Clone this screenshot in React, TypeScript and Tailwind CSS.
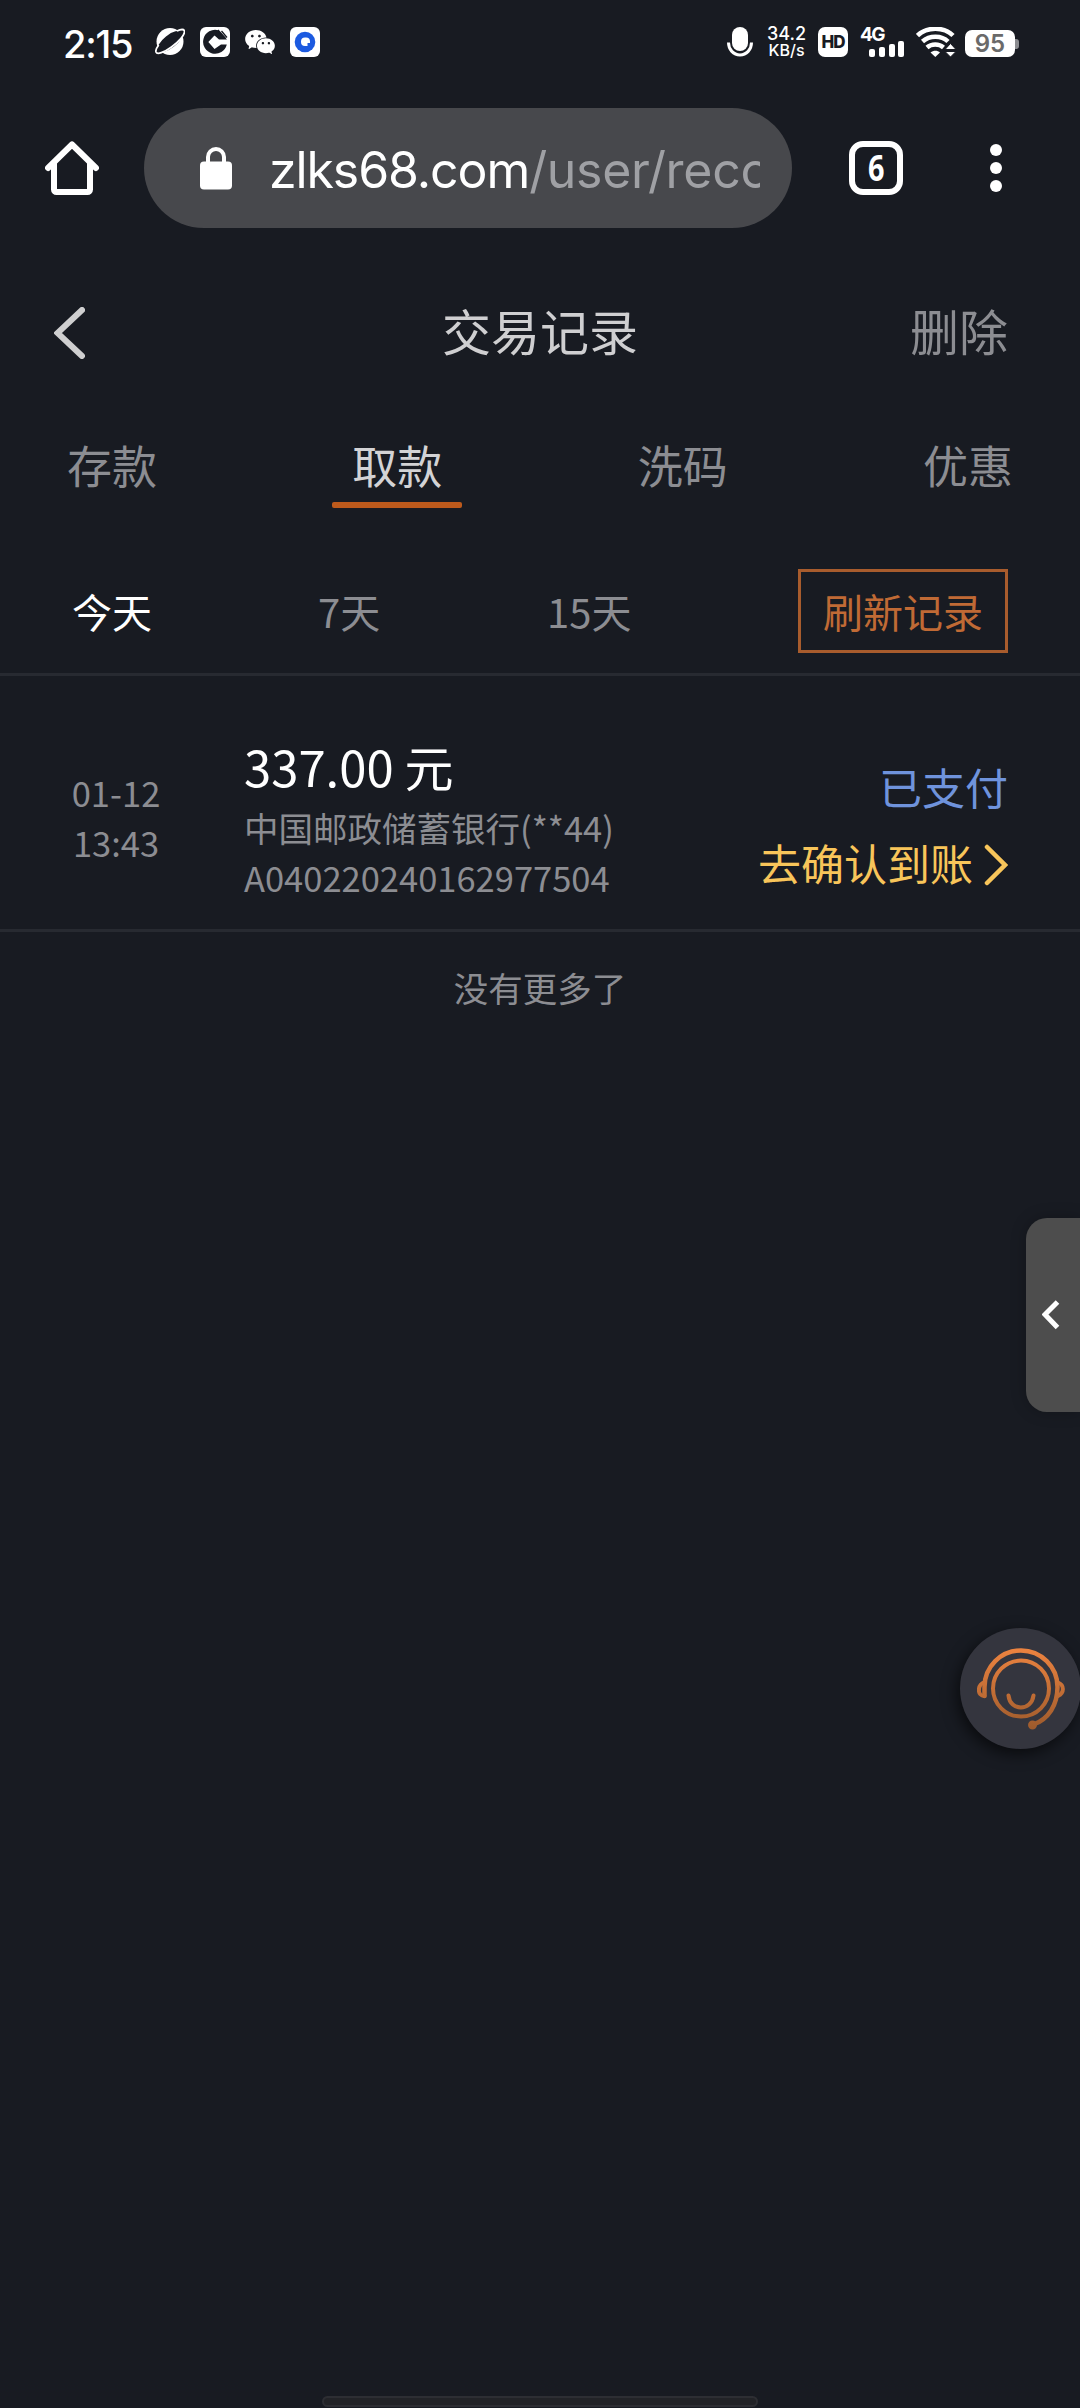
import clsx from "clsx";
import { useState } from "react";
import { AiFillWechat } from "react-icons/ai";

const tabs = ["存款", "取款", "洗码", "优惠"];

const records = [
  {
    date: "01-12",
    time: "13:43",
    amount: "337.00 元",
    bank: "中国邮政储蓄银行(**44)",
    orderNo: "A040220240162977504",
    status: "已支付",
    action: "去确认到账",
  },
];

function StatusBar() {
  return (
    <div className="flex h-[84px] items-center pl-[63px] font-['Inter',sans-serif] text-white">
      <span className="mt-1 w-[92px] text-[38px] leading-none font-medium tracking-[-1.2px] whitespace-nowrap">
        2:15
      </span>
      <svg className="h-[30px] w-[30px]" viewBox="0 0 30 30">
        <circle cx="15" cy="14.5" r="13.5" fill="#fff" />
        <ellipse cx="15" cy="14.5" rx="15" ry="6.5" transform="rotate(-38 15 14.5)" fill="#181b23" />
        <path
          d="M22 4c4-2 7-2 7.500 0 .5 4-6 11-13 16C9 25.500 2 28 1 25c-.6-2 .8-4.500 2.700-7"
          fill="none"
          stroke="#fff"
          strokeWidth="1.800"
        />
      </svg>
      <svg className="ml-[15px] h-[30px] w-[30px]" viewBox="0 0 30 30">
        <rect width="30" height="30" rx="6" fill="#fff" />
        <path d="M18.500 3.300A12 12 0 1 0 26.800 17.500H21L14.500 22 8.500 15l6-6.500 4.500 4h8z" fill="#181b23" />
        <path d="M18 3l7.500 8.500M21.500 4l5.500 6.500" stroke="#181b23" strokeWidth="1.300" />
        <path d="M14.500 9l6 6-6 6-6-6z" fill="#fff" />
      </svg>
      <AiFillWechat className="ml-[13px] h-[34px] w-[34px]" />
      <svg className="ml-[13px] h-[30px] w-[30px]" viewBox="0 0 30 30">
        <rect width="30" height="30" rx="6" fill="#fff" />
        <circle cx="15" cy="15" r="10.300" fill="#1c5ae0" />
        <path d="M11 14.500a4 4 0 0 1 4-4h1a4 4 0 0 1 4 4v1.500h-2.500v3H15a4 4 0 0 1-4-4z" fill="#fff" />
      </svg>

      <svg className="ml-[407px] h-[30px] w-[26px]" viewBox="0 0 26 30">
        <rect x="5" width="16" height="24" rx="8" fill="#fff" />
        <path d="M1.500 15.500c0 7 5 12.500 11.500 12.500s11.500-5.500 11.500-12.500" fill="none" stroke="#fff" strokeWidth="3" />
      </svg>
      <div className="ml-[12px] w-[43px] text-center leading-[16px] font-medium">
        <div className="text-[18px]">34.2</div>
        <div className="text-[16px]">KB/s</div>
      </div>
      <div className="ml-[10px] flex h-[30px] w-[30px] items-center justify-center rounded-[7px] bg-white text-[17px] leading-none font-extrabold tracking-[-1px] text-[#181b23]">
        HD
      </div>
      <div className="ml-[12px] flex h-[30px] w-[45px] flex-col">
        <span className="text-[19px] leading-[16px] font-bold tracking-[-1.5px]">4G</span>
        <svg className="mt-[-2px] ml-[9px] h-[16px] w-[36px] shrink-0" viewBox="0 0 36 16" fill="#fff">
          <rect y="8" width="6" height="8" rx="2" />
          <rect x="10" y="6" width="6" height="10" rx="2" />
          <rect x="20" y="3" width="6" height="13" rx="2" />
          <rect x="29" width="6" height="16" rx="2" />
        </svg>
      </div>
      <svg className="ml-[11px] h-[30px] w-[40px]" viewBox="0 0 40 30">
        <g fill="none" stroke="#fff" strokeWidth="4.500">
          <path d="M1.500 8.500C11-.5 28-.5 37 8.500" />
          <path d="M6.500 14.500c7-6.500 19-6.500 25.500 0" />
          <path d="M11 20.500c4.500-4 12-4 16.500 0" />
        </g>
        <path d="M14.500 25.500c3-2.500 7-2.500 9.500 0l-4.700 4.500z" fill="#fff" />
        <path d="M29 22.500l5.500-6 5.500 6zM29 24.500h11L34.500 30z" fill="#fff" stroke="#181b23" strokeWidth="1" />
      </svg>
      <div className="mt-[3px] ml-[9px] flex h-[27px] w-[50px] items-center justify-center rounded-[7px] bg-white text-[24px] leading-none font-semibold text-[#6a6a6a]">
        95
      </div>
      <div className="mt-[3px] h-[10px] w-[4px] rounded-r-[3px] bg-[#8b8c90]" />
    </div>
  );
}

function BrowserBar() {
  return (
    <div className="flex h-[168px] items-center pl-[45px]">
      <svg className="h-[54px] w-[54px]" viewBox="0 0 54 54" fill="none" stroke="#fff" strokeWidth="6">
        <path d="M3 27L27 3.500 51 27" strokeLinecap="round" strokeLinejoin="round" />
        <path d="M9 22v26.500a2.500 2.500 0 0 0 2.500 2.500h31a2.500 2.500 0 0 0 2.500-2.500V22" />
      </svg>
      <div className="ml-[45px] flex h-[120px] w-[648px] items-center rounded-full bg-[#47484c] pl-[56px]">
        <svg className="h-[43px] w-[32px]" viewBox="0 0 32 43">
          <rect y="14.500" width="32" height="28" rx="4" fill="#fff" />
          <path d="M8 16V10a8 8 0 0 1 16 0v6" fill="none" stroke="#fff" strokeWidth="4" />
        </svg>
        <div className="mt-1 ml-[37px] w-[491px] overflow-hidden font-['Inter',sans-serif] text-[50px] leading-[64px] tracking-[-0.3px] whitespace-nowrap text-[#9fa0a4]">
          <span className="tracking-[-1.1px] text-white">zlks68.com</span>/user/reco
        </div>
      </div>
      <div className="ml-[57px] flex h-[54px] w-[54px] items-center justify-center rounded-[14px] border-6 border-white font-['Open_Sans',sans-serif] text-[36px] leading-none font-bold text-white">
        <span className="scale-x-80">6</span>
      </div>
      <div className="ml-[87px] flex flex-col gap-[6px]">
        <i className="h-[12px] w-[12px] rounded-full bg-white" />
        <i className="h-[12px] w-[12px] rounded-full bg-white" />
        <i className="h-[12px] w-[12px] rounded-full bg-white" />
      </div>
    </div>
  );
}

function ServiceIcon() {
  return (
    <svg className="h-[82px] w-[88px]" viewBox="0 0 88 82" fill="none" stroke="url(#service)" strokeWidth="4.500" strokeLinecap="round">
      <defs>
        <linearGradient id="service" gradientUnits="userSpaceOnUse" x1="44" y1="0" x2="44" y2="82">
          <stop offset="0" stopColor="#ee8440" />
          <stop offset="1" stopColor="#9c5a2c" />
        </linearGradient>
      </defs>
      <path d="M7.500 48V39a36.500 36.500 0 0 1 73 0c0 18-9 32-24 37.500" />
      <path d="M7.500 34c-7.500 3-7.500 14 0 14M81 34.500c6.500 2.500 6.500 10.500 0 13.500" strokeWidth="4" />
      <circle cx="44" cy="40.500" r="28" strokeWidth="4" />
      <path d="M31.500 47.500c1.500 16 23 16 25 0" strokeWidth="4" />
      <circle cx="55.500" cy="77" r="2.200" />
    </svg>
  );
}

export default function App() {
  const [activeTab, setActiveTab] = useState("取款");

  return (
    <div className="relative h-[2408px] w-[1080px] overflow-hidden bg-[#181b22] font-['Noto_Sans_CJK_SC',sans-serif] text-[#8c8d92]">
      <StatusBar />
      <BrowserBar />

      <header className="grid h-[154px] grid-cols-3 items-center px-[72px] pt-[2px] text-[49px] leading-[70px]">
        <svg className="mt-[5px] -ml-[18px] h-[52px] w-[31px]" viewBox="0 0 31 52">
          <path d="M28 3L3.500 26 28 49" fill="none" stroke="#cfcfd0" strokeWidth="6" strokeLinecap="round" />
        </svg>
        <h1 className="text-center text-[#cfcfd1]">交易记录</h1>
        <button className="text-right">删除</button>
      </header>

      <nav className="flex h-[102px] justify-between px-[47px]">
        {tabs.map((tab) => (
          <button
            key={tab}
            onClick={() => setActiveTab(tab)}
            className="flex w-[130px] flex-col items-center justify-end text-[45px] leading-[74px]"
          >
            <span className={clsx(tab === activeTab && "text-[#d3d3d5]")}>{tab}</span>
            <i className={clsx("h-[6px] w-full rounded-[2px]", tab === activeTab && "bg-[#bd5a1c]")} />
          </button>
        ))}
      </nav>

      <div className="flex h-[168px] items-center border-b-3 border-[#272a31] pt-[41px] pl-[72px] text-[40px] leading-[60px]">
        <button className="w-[246px] text-left text-white">今天</button>
        <button className="w-[229px] text-left">7天</button>
        <button className="w-[251px] text-left">15天</button>
        <button className="h-[84px] w-[210px] border-3 border-[#a85c2d] text-[#c06a35]">
          刷新记录
        </button>
      </div>

      {records.map((record) => (
        <div
          key={record.orderNo}
          className="flex h-[256px] border-b-3 border-[#272a31] pr-[72px] text-[34.5px] leading-[50px] whitespace-nowrap"
        >
          <div className="w-[232px] pt-[91px] pl-[72px]">
            <div className="flex w-[88px] flex-col items-center">
              <div>{record.date}</div>
              <div>{record.time}</div>
            </div>
          </div>
          <div className="flex-1 pt-[53px] pl-[12px]">
            <div className="text-[49px] leading-[73px] text-white">{record.amount}</div>
            <div>{record.bank}</div>
            <div>{record.orderNo}</div>
          </div>
          <div className="flex flex-col items-end pt-[72px] text-[43px] leading-[76px]">
            <div className="text-[#6f93dc]">{record.status}</div>
            <div className="flex items-center text-[#f8c55a]">
              {record.action}
              <svg className="mt-[5px] ml-[11px] h-[42px] w-[24px]" viewBox="0 0 24 42">
                <path d="M3 3l18 18L3 39" fill="none" stroke="currentColor" strokeWidth="4.500" strokeLinecap="round" />
              </svg>
            </div>
          </div>
        </div>
      ))}

      <p className="pt-[30px] text-center text-[34.5px] leading-[50px]">没有更多了</p>

      {/* side drawer handle */}
      <div className="absolute top-[1218px] right-0 flex h-[194px] w-[54px] items-center rounded-l-[21px] bg-[#4d4d4d] pl-[16px] shadow-[0_0_15px_rgba(0,0,0,0.25)]">
        <svg className="h-[30px] w-[18px]" viewBox="0 0 18 30">
          <path d="M15.500 2L3 14.500 15.500 27.500" fill="none" stroke="#fff" strokeWidth="5" />
        </svg>
      </div>

      {/* customer service bubble */}
      <div className="absolute top-[1628px] left-[960px] flex h-[121px] w-[121px] items-center justify-center rounded-full bg-[#34353e] shadow-[-3px_5px_15px_rgba(0,0,0,0.6)]">
        <ServiceIcon />
      </div>

      {/* gesture bar */}
      <div className="absolute top-[2396px] left-[322px] h-[11px] w-[436px] rounded-full border-2 border-[#2d2e33] bg-[#222327]" />
    </div>
  );
}
